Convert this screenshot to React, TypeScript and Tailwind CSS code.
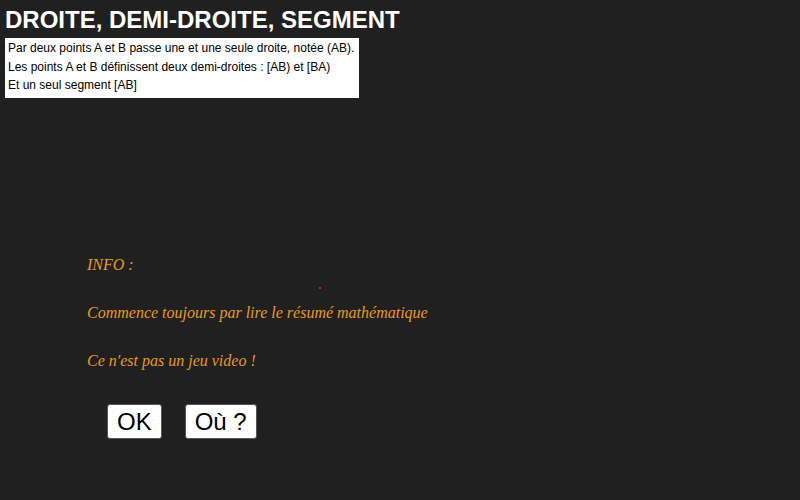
export default function App() {
  return (
    <div className="w-[800px] h-[500px] bg-[#202020] overflow-hidden relative" style={{ fontFamily: '"Liberation Sans", Arial, sans-serif' }}>
      <h1 className="pl-[5px] pt-[6px] text-[24px] leading-[28px] font-bold text-white">DROITE, DEMI-DROITE, SEGMENT</h1>
      <div className="ml-[5px] mt-[4px] w-[354px] h-[60px] bg-white pl-[3px] pt-[1px] text-[12px] leading-[18.5px] text-black">
        <div>Par deux points A et B passe une et une seule droite, notée (AB).</div>
        <div>Les points A et B définissent deux demi-droites : [AB) et [BA)</div>
        <div>Et un seul segment [AB]</div>
      </div>
      <div className="ml-[87px] mt-[158px] flex flex-col gap-[30px] text-[16px] leading-[18px] italic text-[#e89a1a]" style={{ fontFamily: '"Liberation Serif", "Times New Roman", serif' }}>
        <div>INFO :</div>
        <div>Commence toujours par lire le résumé mathématique</div>
        <div>Ce n'est pas un jeu video !</div>
      </div>
      <div className="absolute left-[319px] top-[287px] w-[2px] h-[2px] bg-[#e0103a]" />
      <div className="ml-[107px] mt-[34px] flex gap-[23px]">
        <button className="h-[35px] px-[9px] bg-white border border-[#555] rounded-[3px] text-[24px] leading-[33px] text-black">OK</button>
        <button className="h-[35px] px-[9px] bg-white border border-[#555] rounded-[3px] text-[24px] leading-[33px] text-black">Où ?</button>
      </div>
    </div>
  );
}
